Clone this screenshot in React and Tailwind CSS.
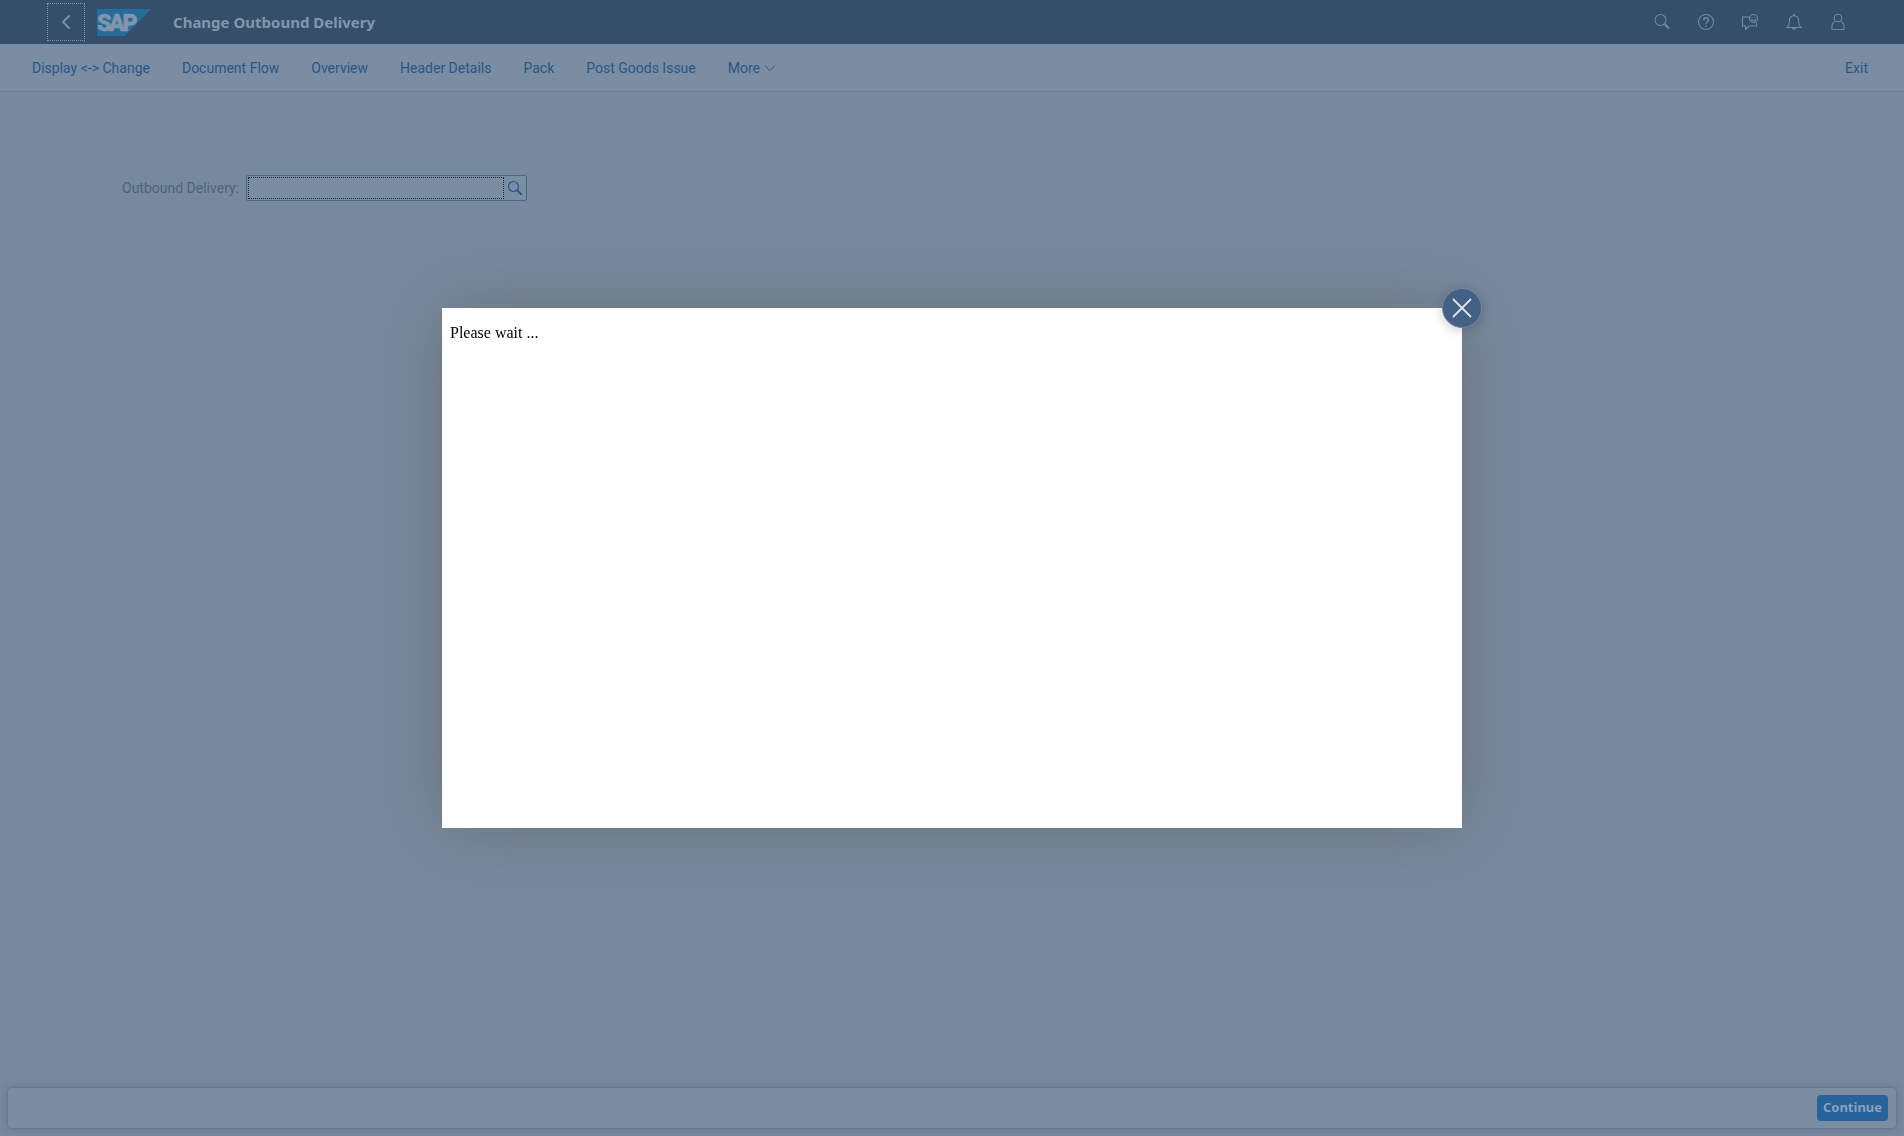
const navItems = ["Display <-> Change", "Document Flow", "Overview", "Header Details", "Pack", "Post Goods Issue"];

function Icon({ children, label }) {
  return (
    <button aria-label={label} className="flex h-9 w-11 items-center justify-center text-[#7189a8]">
      <svg viewBox="0 0 18 18" className="size-[18px]" fill="none" stroke="currentColor" strokeWidth="1.1">
        {children}
      </svg>
    </button>
  );
}

function SapLogo() {
  return (
    <svg viewBox="0 0 54 27" className="ml-3 h-[27px] w-[54px]" role="img" aria-label="SAP">
      <path d="M0 0H54L28 27H0Z" fill="#246d9b" />
      <g fontFamily="Roboto, sans-serif" fontWeight="900" fontSize="23" fill="#8295ac" stroke="#8295ac" strokeWidth="0.500">
        <text x="0" y="21.500">S</text>
        <text x="12" y="21.500">A</text>
        <text x="25.500" y="21.500">P</text>
      </g>
    </svg>
  );
}

function ShellHeader() {
  return (
    <header className="flex h-11 items-center bg-[#354f6a] pr-11 pl-[47px]">
      <button aria-label="Back" className="flex size-[38px] items-center justify-center border border-dotted border-[#8295ac] text-[#7b93b4]">
        <svg viewBox="0 0 10 16" className="h-4 w-2.5" fill="none" stroke="currentColor" strokeWidth="1.8">
          <path d="M8.500 1.500L2 8l6.500 6.500" />
        </svg>
      </button>
      <SapLogo />
      <h1 className="ml-[22px] font-['Noto_Sans',sans-serif] text-[15px] font-bold text-[#8496ac]">Change Outbound Delivery</h1>
      <div className="ml-auto flex">
        <Icon label="Search">
          <circle cx="7.500" cy="7" r="5.500" />
          <path d="M11.500 11l4.500 4.500" strokeWidth="2" />
        </Icon>
        <Icon label="Help">
          <circle cx="9" cy="9" r="7.500" />
          <path d="M6.700 7.200c0-3.200 4.800-3.100 4.800-.3 0 1.900-2.400 1.700-2.400 3.800M9.100 12.200v1.500" strokeWidth="1.400" />
        </Icon>
        <Icon label="Feedback">
          <path d="M9 4H1.500v9H4.500v3.500L8 13h7.500V9.500" />
          <circle cx="12.500" cy="5.500" r="4" />
          <path d="M10.300 6.300c.8 2 3.600 2 4.400 0M11 4.300v.9M14 4.300v.9" />
        </Icon>
        <Icon label="Notifications">
          <path d="M2 14.500h14c-2-1.500-2.300-3-2.300-6.500 0-3-1.700-5.300-4.700-5.300S4.300 5 4.300 8C4.300 11.500 4 13 2 14.500Z" />
          <path d="M9 2.700V1M7.300 15.700h3.400" strokeWidth="1.600" />
        </Icon>
        <Icon label="User">
          <circle cx="9" cy="5" r="3.800" />
          <path d="M6.300 8.500C3.800 9.500 3 11.500 3 13.500v3h12v-3c0-2-.8-4-3.300-5" />
        </Icon>
      </div>
    </header>
  );
}

function Toolbar() {
  return (
    <nav className="flex h-12 items-center gap-8 border-b border-[#6b7f97] bg-[#7b8da2] pr-9 pl-8 text-sm text-[#2a5685]">
      {navItems.map((item) => (
        <button key={item} className="whitespace-nowrap">{item}</button>
      ))}
      <button className="flex items-center gap-1">
        More
        <svg viewBox="0 0 14 8" className="h-2 w-3" fill="none" stroke="currentColor" strokeWidth="1.1">
          <path d="M1 1l6 6 6-6" />
        </svg>
      </button>
      <button className="ml-auto">Exit</button>
    </nav>
  );
}

function DeliveryForm() {
  return (
    <main className="flex-1 px-[122px] pt-[83px]">
      <div className="flex items-center gap-1">
        <label htmlFor="delivery" className="min-w-[120px] text-sm whitespace-nowrap text-[#4d637d]">Outbound Delivery:</label>
        <div className="flex h-[26px] w-[281px] items-center rounded-xs border border-[#50657f] bg-[#7b8da2] pl-px">
          <input id="delivery" className="h-[22px] min-w-0 flex-1 border border-dotted border-[#1c2f48] px-1 text-sm outline-none" />
          <button aria-label="Value help" className="flex w-[22px] justify-center text-[#23598f]">
            <svg viewBox="0 0 16 16" className="size-4" fill="none" stroke="currentColor" strokeWidth="1.200">
              <circle cx="6.500" cy="6.500" r="5" />
              <path d="M10.200 10.200l4.500 4.500" strokeWidth="2" />
            </svg>
          </button>
        </div>
      </div>
    </main>
  );
}

function WaitDialog() {
  return (
    <div className="fixed inset-0 flex items-center justify-center">
      <div role="dialog" aria-label="Please wait" className="relative h-[520px] w-[1020px] bg-white p-2 pt-4 shadow-[0_0_64px_#6b7377]">
        <p className="font-['Liberation_Serif',serif] text-base leading-[18px] text-black">Please wait ...</p>
        <button aria-label="Close" className="absolute -top-5 -right-5 flex size-10 items-center justify-center rounded-full border border-[#7488a3] bg-[#426185] text-[#dde4ec] shadow-[0_2px_12px_rgba(0,0,0,0.2)]">
          <svg viewBox="0 0 20 20" className="size-5" fill="none" stroke="currentColor" strokeWidth="1.800">
            <path d="M1 1l18 18M19 1L1 19" />
          </svg>
        </button>
      </div>
    </div>
  );
}

export default function App() {
  return (
    <div className="flex min-h-screen flex-col bg-[#77899f] font-[Roboto,sans-serif]">
      <ShellHeader />
      <Toolbar />
      <DeliveryForm />
      <footer className="mx-[7px] mb-[7px] flex h-[42px] items-center justify-end rounded border border-[#64788f] bg-[#7b8da2] pr-2 shadow-[0_0_6px_rgba(60,80,105,0.35)]">
        <button className="h-[26px] min-w-[71px] rounded bg-[#27629a] px-1 font-['Noto_Sans',sans-serif] text-[13px] font-bold text-[#8ba0b9]">Continue</button>
      </footer>
      <WaitDialog />
    </div>
  );
}
